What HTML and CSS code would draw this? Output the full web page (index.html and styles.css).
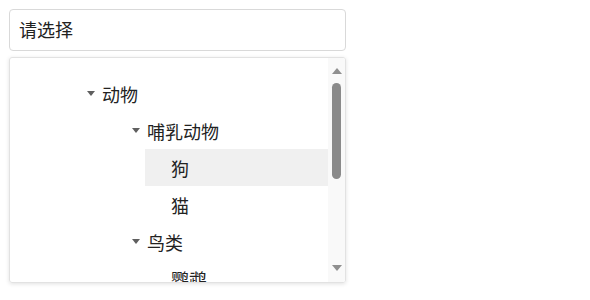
FILE: index.html
```html
<!DOCTYPE html>
<html lang="zh-CN">
<head>
<meta charset="utf-8">
<link rel="stylesheet" href="styles.css">
</head>
<body>
<div class="select">
  <div class="input">请选择</div>
  <div class="dropdown">
    <div class="tree">
      <div class="row l1"><span class="caret"></span><span class="label">动物</span></div>
      <div class="row l2"><span class="caret"></span><span class="label">哺乳动物</span></div>
      <div class="row leaf active"><span class="label">狗</span></div>
      <div class="row leaf"><span class="label">猫</span></div>
      <div class="row l2"><span class="caret"></span><span class="label">鸟类</span></div>
      <div class="row leaf"><span class="label">鹦鹉</span></div>
    </div>
    <div class="scrollbar">
      <span class="arrow up"></span>
      <span class="thumb"></span>
      <span class="spacer"></span>
      <span class="arrow down"></span>
    </div>
  </div>
</div>
</body>
</html>
```
FILE: styles.css
```css
html, body {
  margin: 0;
  padding: 0;
  background: #ffffff;
}
body {
  padding: 9px;
  font-family: "Noto Sans CJK SC", "Noto Sans", sans-serif;
  color: #222222;
}
.select {
  width: 337px;
}
.input {
  box-sizing: border-box;
  height: 42px;
  border: 1px solid #d9d9d9;
  border-radius: 4px;
  padding-left: 9px;
  font-size: 18px;
  line-height: 39px;
  color: #222222;
}
.dropdown {
  box-sizing: border-box;
  margin-top: 6px;
  height: 226px;
  border: 1px solid #e2e2e2;
  border-radius: 3px;
  box-shadow: 0 1px 4px rgba(0, 0, 0, 0.12);
  display: flex;
  overflow: hidden;
}
.tree {
  flex: 1;
  padding-top: 17px;
  overflow: hidden;
}
.row {
  display: flex;
  align-items: center;
  height: 37px;
  font-size: 18px;
  white-space: nowrap;
}
.row.l1 {
  padding-left: 77px;
}
.row.l2 {
  padding-left: 122px;
}
.row.leaf {
  margin-left: 135px;
  padding-left: 26px;
}
.row.active {
  background: #f0f0f0;
}
.caret {
  width: 0;
  height: 0;
  border-left: 4.5px solid transparent;
  border-right: 4.5px solid transparent;
  border-top: 5px solid #5f5f5f;
  margin-right: 7px;
}
.scrollbar {
  width: 17px;
  background: #f9f9f9;
  display: flex;
  flex-direction: column;
  align-items: center;
  padding: 10px 0 11px;
  box-sizing: border-box;
}
.arrow {
  width: 0;
  height: 0;
  border-left: 5px solid transparent;
  border-right: 5px solid transparent;
}
.arrow.up {
  border-bottom: 6px solid #8f8f8f;
}
.arrow.down {
  border-top: 6px solid #8f8f8f;
}
.thumb {
  margin-top: 9px;
  width: 9px;
  height: 96px;
  border-radius: 5px;
  background: #8a8a8a;
}
.spacer {
  flex: 1;
}
```
